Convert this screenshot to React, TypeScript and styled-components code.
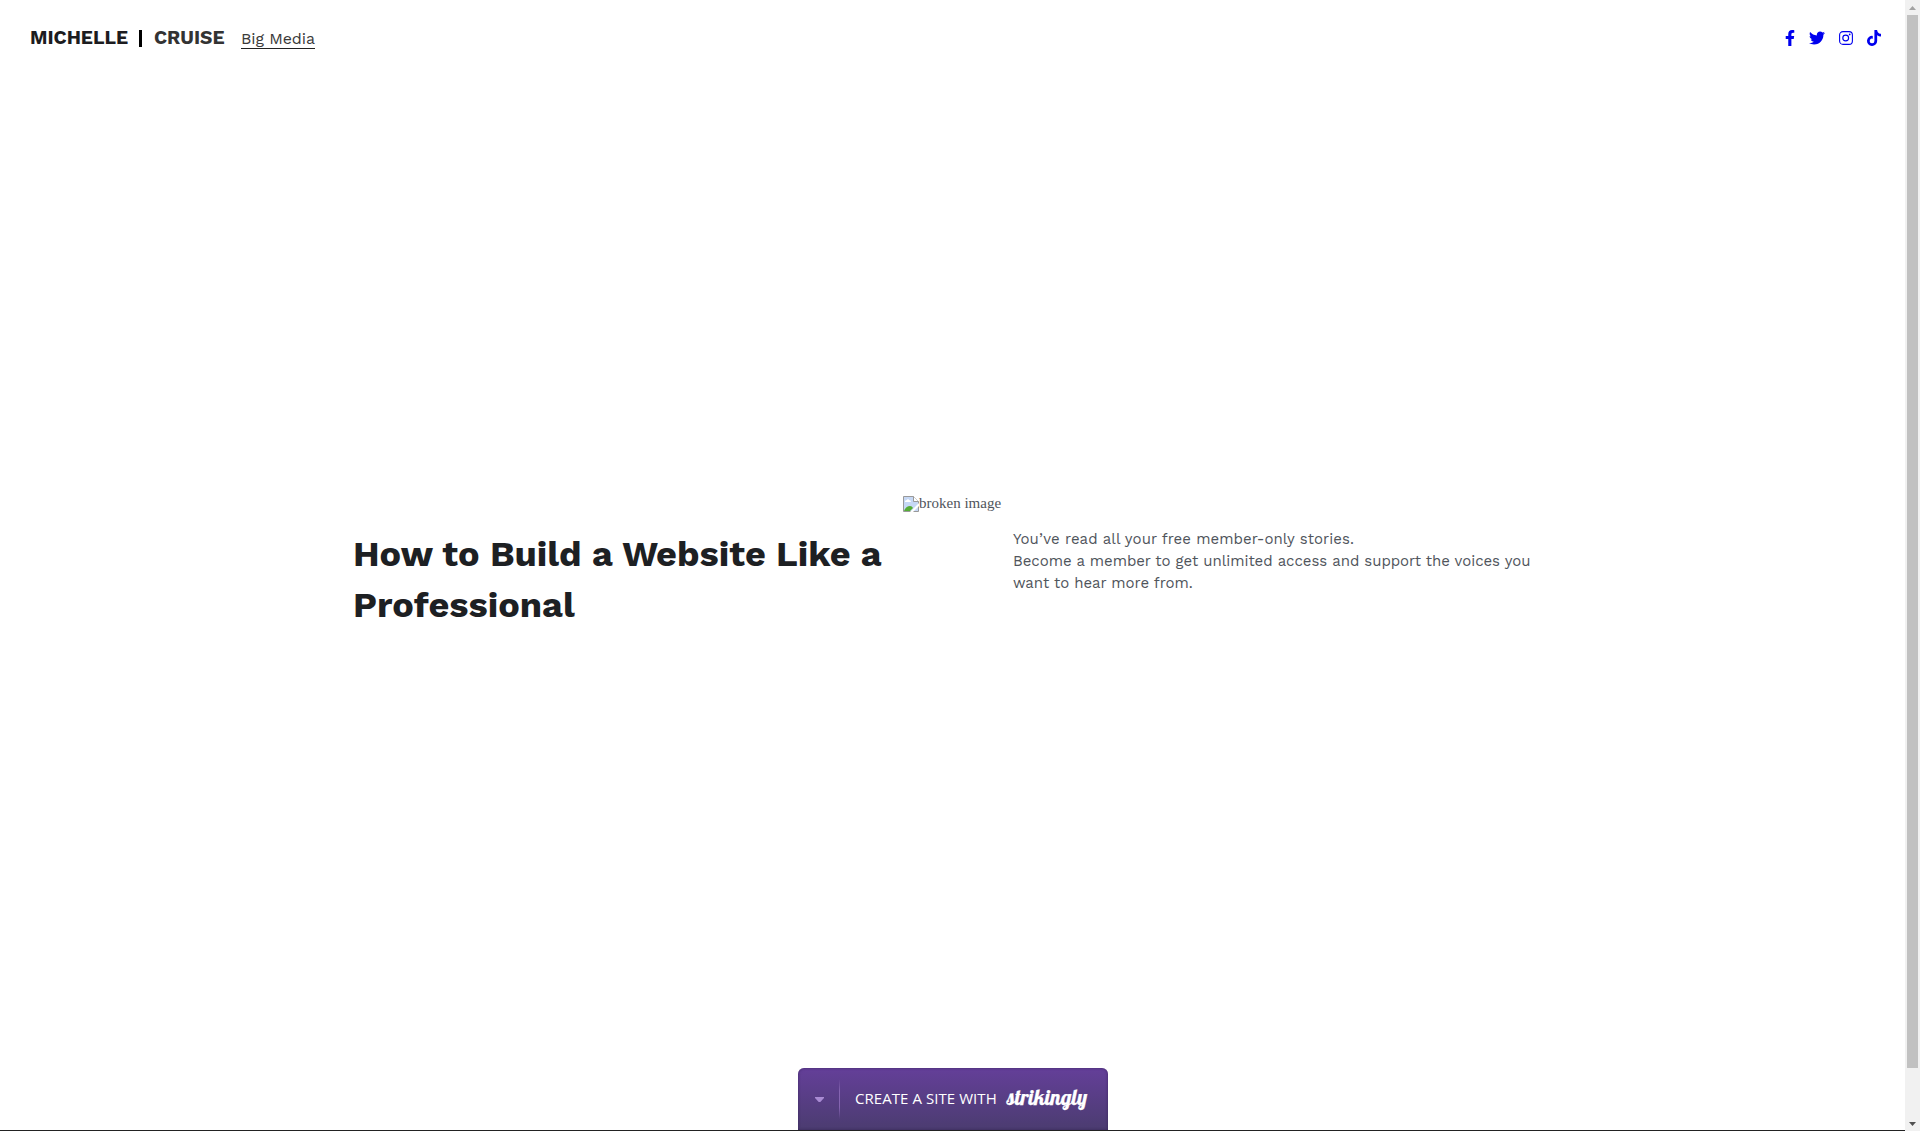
import React from "react";
import styled, { createGlobalStyle } from "styled-components";
import { FaFacebookF, FaTwitter, FaTiktok } from "react-icons/fa";

const GlobalStyle = createGlobalStyle`
  * { box-sizing: border-box; }
  body { margin: 0; background: #fff; overflow: hidden; }
`;

const Window = styled.div`
  display: grid;
  grid-template-columns: 1fr 15px;
  height: 1131px;
  font-family: "Work Sans", Inter, sans-serif;
`;

const Page = styled.div`
  display: flex;
  flex-direction: column;
  min-width: 0;
  border-bottom: 1px solid #222;
`;

const Header = styled.header`
  display: flex;
  justify-content: space-between;
  align-items: flex-start;
  height: 76px;
  padding: 26px 16px 0 30px;
`;

const Brand = styled.div`
  display: flex;
  height: 24px;
  line-height: 24px;
  white-space: nowrap;
`;

const BrandWord = styled.span<{ $width: number; $color: string }>`
  width: ${(p) => p.$width}px;
  color: ${(p) => p.$color};
  font-size: 19.2px;
  font-weight: 700;
`;

const BrandBar = styled.span`
  width: 3px;
  height: 17px;
  margin: 4px 12px 0 0;
  background: #000;
`;

const NavLink = styled.a`
  height: 23px;
  padding-top: 1px;
  border-bottom: 1px solid #222;
  color: #3a3a3a;
  font-size: 16px;
  letter-spacing: -0.1px;
`;

const Socials = styled.nav`
  display: flex;
  align-items: center;
  height: 24px;
  color: #00e;
`;

const SocialLink = styled.a<{ $width: number }>`
  display: flex;
  justify-content: center;
  width: ${(p) => p.$width}px;
`;

const Main = styled.main`
  flex: 1;
  padding: 420px 352px 0 353px;
`;

const BrokenImage = styled.div`
  display: flex;
  height: 16px;
  padding-left: 550px;
  color: #50555c;
  font: 15px/15px "Liberation Serif", serif;
  white-space: nowrap;
`;

const Columns = styled.section`
  display: grid;
  grid-template-columns: 660px 540px;
  padding-top: 16px;
`;

const Title = styled.h1`
  margin: 0;
  padding-top: 1px;
  color: #1d2023;
  font-size: 36px;
  font-weight: 700;
  line-height: 51px;
`;

const Line = styled.span<{ $spacing?: number }>`
  display: block;
  white-space: nowrap;
  letter-spacing: ${(p) => p.$spacing ?? 0}px;
`;

const Copy = styled.p`
  margin: 0;
  color: #50555c;
  font-size: 15px;
  line-height: 22px;
`;

const Banner = styled.aside`
  display: flex;
  align-items: center;
  align-self: center;
  width: 310px;
  height: 62px;
  margin-left: 1px;
  padding-left: 17px;
  border-radius: 6px 6px 0 0;
  background: linear-gradient(#643f99, #4b3c70);
  box-shadow: inset 0 0 3px rgba(40, 20, 70, 0.6);
  color: #fff;
  white-space: nowrap;
`;

const Caret = styled.svg`
  width: 9px;
  height: 5px;
  margin-right: 15px;
  fill: #a98bd3;
`;

const Divider = styled.span`
  width: 1px;
  height: 40px;
  background: linear-gradient(transparent, #8564b1 30%, #8564b1 70%, transparent);
`;

const BannerText = styled.span`
  width: 152px;
  margin-left: 15px;
  padding-bottom: 2px;
  font: 15px/20px "Open Sans", sans-serif;
  letter-spacing: 0.06px;
`;

const Wordmark = styled.span`
  padding-bottom: 4px;
  font: 400 21px/24px Lobster, "Liberation Serif", serif;
  -webkit-text-stroke: 0.25px #fff;
`;

const Scrollbar = styled.div`
  display: flex;
  flex-direction: column;
  align-items: center;
  background: #f1f1f1;
`;

const Thumb = styled.div`
  width: 11px;
  height: 1053px;
  background: #c1c1c1;
`;

const ArrowBox = styled.div<{ $push?: boolean }>`
  height: 15px;
  margin-top: ${(p) => (p.$push ? "auto" : "0")};
`;

function InstagramIcon() {
  return (
    <svg width="14" height="14" viewBox="0 0 14 14" fill="none" stroke="currentColor">
      <rect x=".6" y=".6" width="12.8" height="12.8" rx="3.4" strokeWidth="1.1" />
      <circle cx="6.7" cy="7" r="2.9" strokeWidth="1.15" />
      <circle cx="10.7" cy="3.4" r=".85" fill="currentColor" stroke="none" />
    </svg>
  );
}

const socials = [
  { icon: <FaFacebookF size={16} />, width: 23 },
  { icon: <FaTwitter size={16} />, width: 32 },
  { icon: <InstagramIcon />, width: 26 },
  { icon: <FaTiktok size={16} />, width: 30 },
];

function BrokenIcon() {
  return (
    <svg width="16" height="16" viewBox="0 0 16 16">
      <path d="M.5 .5H10.5L15.5 5.5V15.5H.5Z" fill="#c6d8f5" stroke="#999" />
      <path d="M10.5 .5V5.5H15.5" fill="#fff" stroke="#999" />
      <path d="M2 6V5Q3 4 4 4Q5 2 6 4Q8 4 8 6Z" fill="#fff" />
      <path d="M1 15Q3 10 7 10Q9 10 10 12L7 15Z" fill="#55ad35" />
      <path d="M7 16L16 7V10L10 16Z" fill="#fff" />
    </svg>
  );
}

export default function App() {
  return (
    <>
      <GlobalStyle />
      <Window>
        <Page>
          <Header>
            <Brand>
              <BrandWord $width={109} $color="#1c1c20">MICHELLE</BrandWord>
              <BrandBar />
              <BrandWord $width={87} $color="#333">CRUISE</BrandWord>
              <NavLink>Big Media</NavLink>
            </Brand>
            <Socials>
              {socials.map(({ icon, width }, i) => (
                <SocialLink key={i} $width={width}>{icon}</SocialLink>
              ))}
            </Socials>
          </Header>
          <Main>
            <BrokenImage><BrokenIcon />broken image</BrokenImage>
            <Columns>
              <Title>
                <Line>How to Build a Website Like a</Line>
                <Line>Professional</Line>
              </Title>
              <Copy>
                <Line $spacing={0.05}>You’ve read all your free member-only stories.</Line>
                <Line $spacing={-0.045}>Become a member to get unlimited access and support the voices you</Line>
                <Line $spacing={-0.04}>want to hear more from.</Line>
              </Copy>
            </Columns>
          </Main>
          <Banner>
            <Caret viewBox="0 0 9 5"><path d="M0 0H9V1L5.3 5H3.7L0 1Z" /></Caret>
            <Divider />
            <BannerText>CREATE A SITE WITH</BannerText>
            <Wordmark>strikingly</Wordmark>
          </Banner>
        </Page>
        <Scrollbar>
          <ArrowBox>
            <svg width="15" height="15"><path d="M4 10H11L7.5 6Z" fill="#a3a3a3" /></svg>
          </ArrowBox>
          <Thumb />
          <ArrowBox $push>
            <svg width="15" height="15"><path d="M4 6H11L7.5 10Z" fill="#505050" /></svg>
          </ArrowBox>
        </Scrollbar>
      </Window>
    </>
  );
}
